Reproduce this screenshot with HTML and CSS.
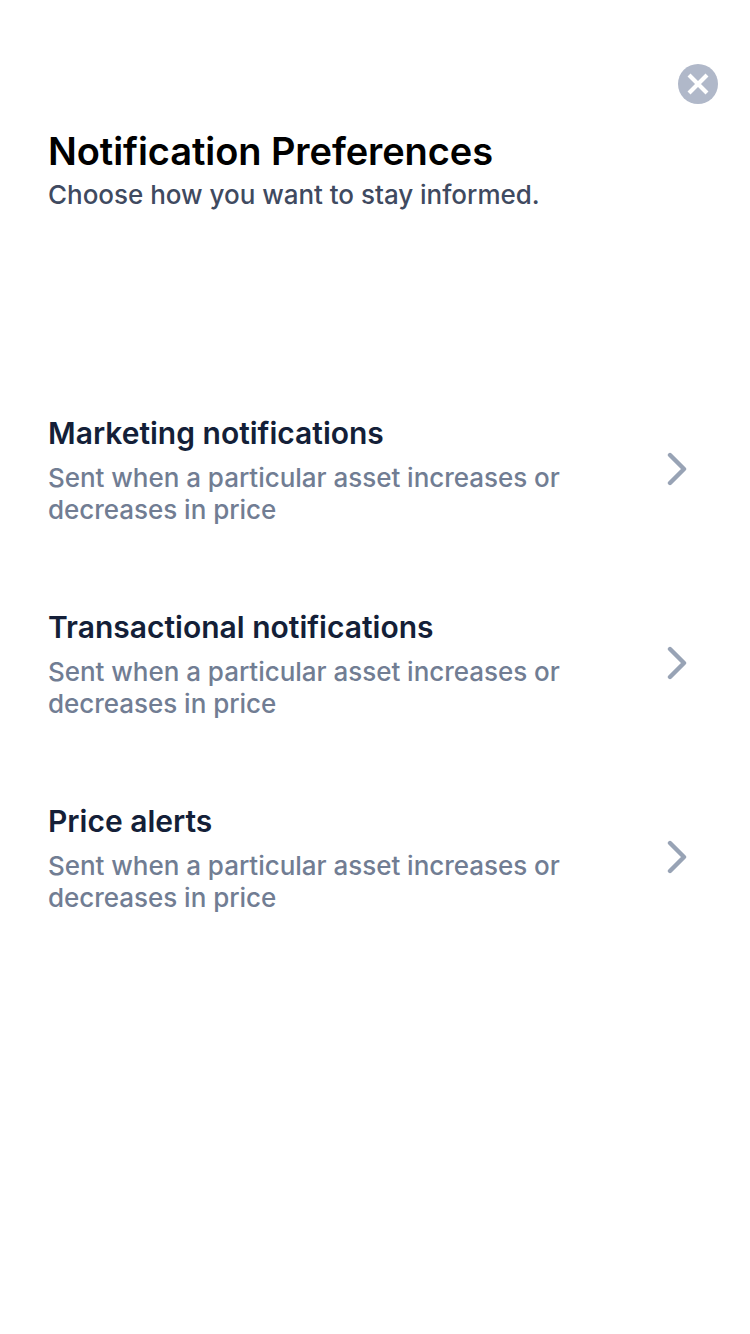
FILE: index.html
```
<!DOCTYPE html>
<html lang="en">
<head>
<meta charset="utf-8">
<title>Notification Preferences</title>
<link rel="stylesheet" href="styles.css">
</head>
<body>
<main class="screen">
  <div class="toolbar">
    <button class="close" aria-label="Close">
      <svg viewBox="0 0 40 40"><circle cx="20" cy="20" r="20" fill="#b0b8c9"/><path d="M12.5 12.5l15 15M27.5 12.5l-15 15" stroke="#fff" stroke-width="4.2" stroke-linecap="square"/></svg>
    </button>
  </div>
  <header class="header">
    <h1 class="title">Notification Preferences</h1>
    <p class="subtitle">Choose how you want to stay informed.</p>
  </header>
  <ul class="list">
    <li class="item">
      <div class="text"><h2 class="name">Marketing notifications</h2><p class="desc">Sent when a particular asset increases or decreases in price</p></div>
      <svg class="chevron" viewBox="0 0 20 34"><path d="M3 3l14 14-14 14"/></svg>
    </li>
    <li class="item">
      <div class="text"><h2 class="name">Transactional notifications</h2><p class="desc">Sent when a particular asset increases or decreases in price</p></div>
      <svg class="chevron" viewBox="0 0 20 34"><path d="M3 3l14 14-14 14"/></svg>
    </li>
    <li class="item">
      <div class="text"><h2 class="name">Price alerts</h2><p class="desc">Sent when a particular asset increases or decreases in price</p></div>
      <svg class="chevron" viewBox="0 0 20 34"><path d="M3 3l14 14-14 14"/></svg>
    </li>
  </ul>
</main>
</body>
</html>
```
FILE: styles.css
```
* { box-sizing: border-box; margin: 0; padding: 0; }
body { background: #fff; font-family: Inter, sans-serif; }
.screen { width: 750px; height: 1334px; padding-top: 64px; overflow: hidden; }
.toolbar { display: flex; justify-content: flex-end; padding-right: 32px; }
.close { width: 40px; height: 40px; border: 0; background: none; }
.close svg { display: block; width: 40px; height: 40px; }
.header { padding: 23px 48px 0; }
.title { font-size: 38px; line-height: 48px; font-weight: 600; letter-spacing: -0.08px; color: #000; white-space: nowrap; }
.subtitle { margin-top: 4px; font-size: 26px; line-height: 32px; font-weight: 500; letter-spacing: -0.02px; color: #3f4a60; white-space: nowrap; }
.list { list-style: none; margin-top: 202px; display: flex; flex-direction: column; gap: 86px; }
.item { height: 108px; padding: 0 63px 0 48px; display: flex; justify-content: space-between; }
.text { width: 560px; }
.name { font-size: 30px; line-height: 40px; font-weight: 600; color: #141f38; white-space: nowrap; }
.desc { margin-top: 9px; font-size: 26px; line-height: 32px; font-weight: 500; letter-spacing: -0.03px; color: #717d93; }
.chevron { width: 20px; height: 34px; margin-top: 39px; fill: none; stroke: #98a3b5; stroke-width: 4.4; stroke-linecap: round; stroke-linejoin: round; }
```
